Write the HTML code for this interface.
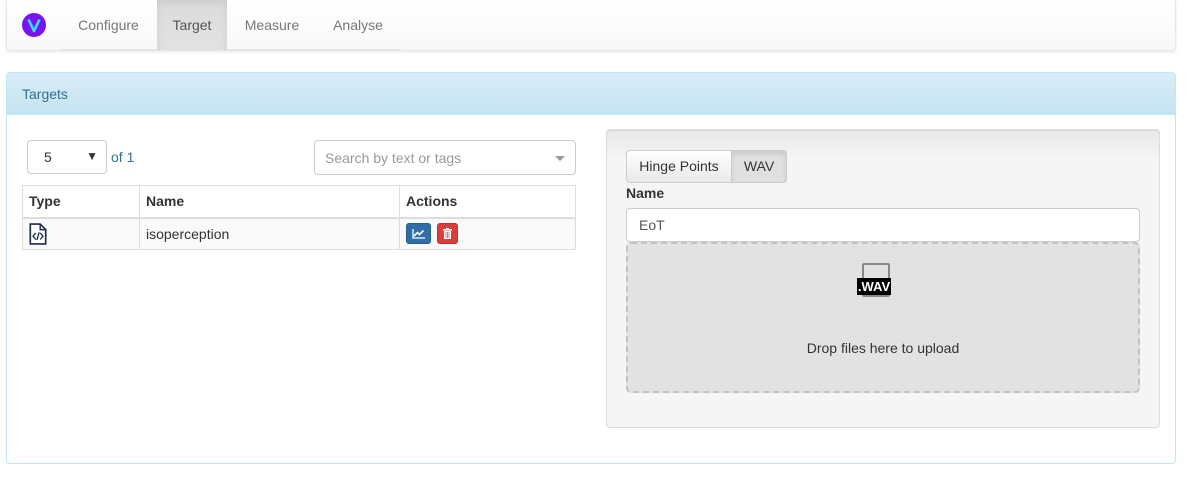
<!DOCTYPE html>
<html><head><meta charset="utf-8"><style>
*{box-sizing:border-box}
body{margin:0;width:1203px;height:502px;background:#fff;font-family:"Liberation Sans",sans-serif;font-size:14px;color:#333;position:relative;overflow:hidden}
.abs{position:absolute}
.nav{left:6px;top:0;width:1170px;height:51px;background:linear-gradient(#fff,#f8f8f8);border:1px solid #e7e7e7;border-top:none;border-radius:0 0 4px 4px;box-shadow:0 1px 3px rgba(0,0,0,.1)}
.tab{top:0;height:50px;line-height:50px;color:#777;font-size:14px;text-align:center}
.panel{left:6px;top:72px;width:1170px;height:392px;border:1px solid #bce8f1;border-radius:4px}
.ph{left:0;top:0;width:1168px;height:42px;background:linear-gradient(#d9edf7,#c4e3f3);border-bottom:1px solid #bce8f1;color:#31708f;padding:13px 15px;font-size:14px;border-radius:3px 3px 0 0}
.inp{border:1px solid #ccc;border-radius:4px;background:#fff}
table{border-collapse:collapse;position:absolute;left:22px;top:185px;width:554px}
td,th{border:1px solid #ddd;padding:0 6px;text-align:left;height:32px}
th{border-bottom:2px solid #ddd;height:32px}
</style></head><body>
<div class="abs nav"></div>
<svg class="abs" style="left:22px;top:13px" width="24" height="24"><circle cx="12" cy="12" r="12" fill="#7b13f0"/><path d="M6.5 6.5 L12 18 L17.5 6.5" stroke="#2fe6f5" stroke-width="2.6" fill="none" stroke-linejoin="round"/></svg>
<div class="abs" style="left:61px;top:49px;width:340px;height:2px;background:#e5e5e5"></div>
<div class="abs tab" style="left:61px;width:95px">Configure</div>
<div class="abs tab" style="left:157px;width:70px;background:linear-gradient(#dbdbdb,#e2e2e2);color:#555;box-shadow:inset 0 3px 8px rgba(0,0,0,.08)">Target</div>
<div class="abs tab" style="left:227px;width:90px">Measure</div>
<div class="abs tab" style="left:317px;width:82px">Analyse</div>

<div class="abs panel"><div class="abs ph">Targets</div></div>

<div class="abs inp" style="left:27px;top:140px;width:80px;height:34px;padding:8px 16px">5<span style="position:absolute;right:8px;top:8px;font-size:12px">▼</span></div>
<div class="abs" style="left:111px;top:149px;color:#31708f">of 1</div>
<div class="abs inp" style="left:314px;top:140px;width:262px;height:35px;padding:9px 10px;color:#999">Search by text or tags<span style="position:absolute;right:10px;top:15px;border:5px solid transparent;border-top-color:#999;border-bottom:none"></span></div>

<table>
<tr><th style="width:117px">Type</th><th style="width:260px">Name</th><th>Actions</th></tr>
<tr style="background:#f9f9f9"><td><svg width="18" height="22" viewBox="0 0 16 20" style="vertical-align:middle"><path d="M1 1h9l5 5v13H1z" fill="#fff" stroke="#1f2d4a" stroke-width="1.5"/><path d="M10 1v5h5" fill="none" stroke="#1f2d4a" stroke-width="1.3"/><path d="M6 9l-2.5 3L6 15M10 9l2.5 3L10 15M9 8.5l-2 7" stroke="#1f2d4a" stroke-width="1.2" fill="none"/></svg></td><td>isoperception</td><td>
<span style="display:inline-block;width:25px;height:21px;background:#2f6ea8;border:1px solid #285e8e;border-radius:3px;vertical-align:middle;position:relative"><svg width="25" height="21" style="position:absolute;left:-1px;top:-1px"><path d="M7 6v9h12" stroke="#fff" fill="none" stroke-width="1.3"/><path d="M8 13l3.5-3.5 2 2 4-4" stroke="#fff" fill="none" stroke-width="1.6"/></svg></span>
<span style="display:inline-block;width:21px;height:21px;background:#d9403b;border:1px solid #c9302c;border-radius:3px;vertical-align:middle;margin-left:2px;position:relative"><svg width="21" height="21" style="position:absolute;left:-1px;top:-1px"><rect x="6" y="6" width="9" height="1.6" fill="#fff"/><rect x="9" y="5" width="3" height="1.5" fill="#fff"/><rect x="7" y="8" width="7" height="8" fill="#fff"/><path d="M9 9v6M10.5 9v6M12 9v6" stroke="#d9403b" stroke-width=".7"/></svg></span></td></tr>
</table>

<div class="abs" style="left:606px;top:129px;width:554px;height:299px;background:linear-gradient(#e8e8e8,#f5f5f5 30px);border:1px solid #dcdcdc;border-radius:4px;box-shadow:inset 0 1px 1px rgba(0,0,0,.05)"></div>
<div class="abs" style="left:626px;top:150px;width:106px;height:33px;border:1px solid #ccc;border-radius:4px 0 0 4px;background:linear-gradient(#fff,#e9e9e9);color:#333;text-align:center;line-height:31px">Hinge Points</div>
<div class="abs" style="left:731px;top:150px;width:56px;height:33px;border:1px solid #ccc;border-radius:0 4px 4px 0;background:#e0e0e0;box-shadow:inset 0 3px 5px rgba(0,0,0,.1);text-align:center;line-height:31px">WAV</div>
<div class="abs" style="left:626px;top:185px;font-weight:bold">Name</div>
<div class="abs inp" style="left:626px;top:208px;width:514px;height:34px;padding:8px 12px;color:#555">EoT</div>
<div class="abs" style="left:626px;top:242px;width:514px;height:151px;background:#e2e2e2;border:2px dashed #c2c2c2;border-radius:5px"></div>
<div class="abs" style="left:862px;top:263px;width:28px;height:34px;border:2px solid #888;border-radius:2px"></div>
<div class="abs" style="left:857px;top:278px;width:34px;height:17px;background:#000;color:#fff;font-size:13px;font-weight:bold;line-height:17px;text-align:center">.WAV</div>
<div class="abs" style="left:626px;top:340px;width:514px;text-align:center;color:#333">Drop files here to upload</div>
</body></html>
